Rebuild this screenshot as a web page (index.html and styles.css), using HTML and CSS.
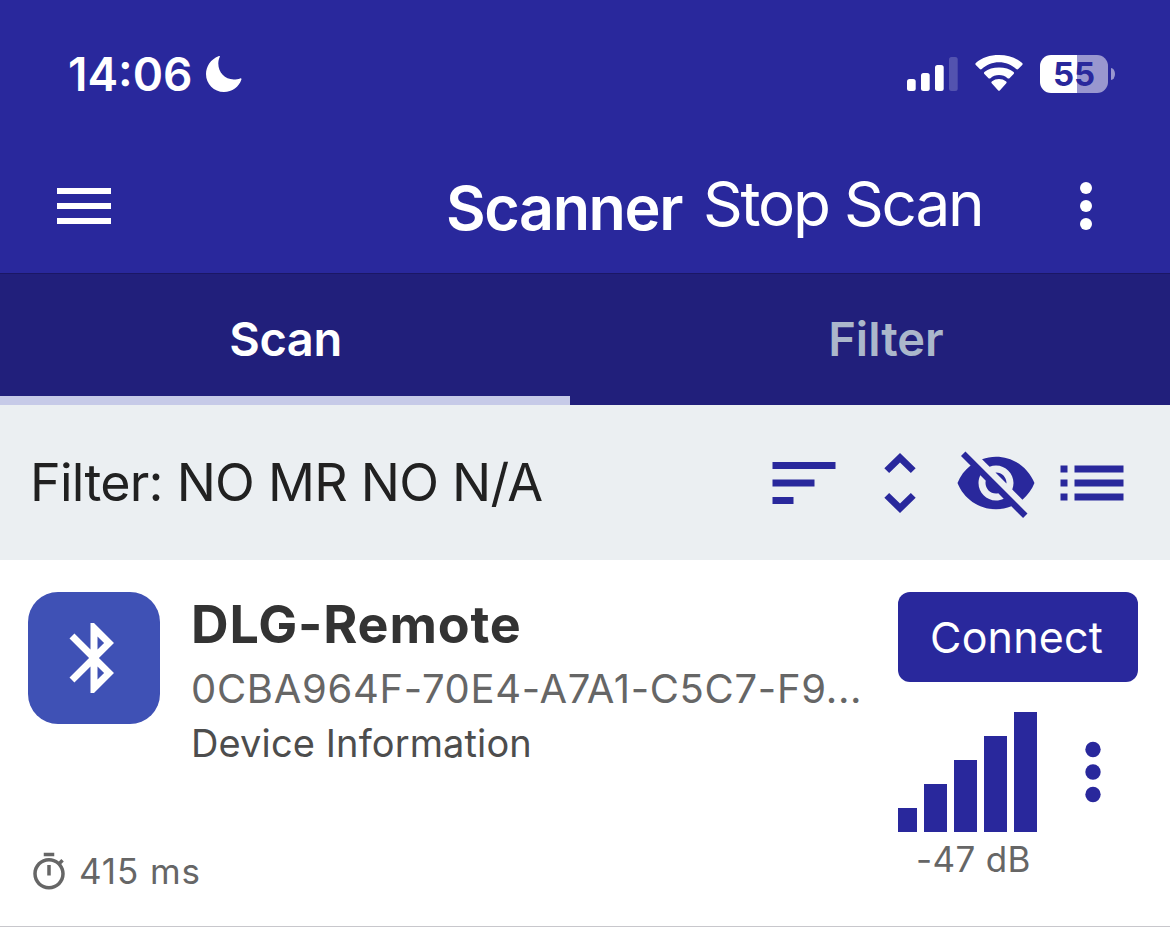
FILE: index.html
```html
<!DOCTYPE html>
<html lang="en">
<head>
<meta charset="utf-8">
<title>Scanner</title>
<link rel="stylesheet" href="styles.css">
</head>
<body>
<header class="header">
  <div class="status">
    <div class="status-left">
      <span class="time">14:06</span>
      <svg class="moon" viewBox="0 0 36 36"><path d="M13.800.8C12.800 3 12.300 5.200 12.300 7.600c0 9 6.600 15.900 15.400 15.900 2.500 0 4.500-.4 6.400-1.100 1-.4 1.600.2 1.300 1.100C33 31 26.200 36 18 36 7.900 36 0 28 0 18 0 10.200 5 3.100 12.400.2c1.100-.4 1.800-.2 1.400.6z"/></svg>
    </div>
    <div class="status-right">
      <svg class="cell" viewBox="0 0 51 34"><rect y="22" width="8.700" height="12" rx="2.500"/><rect x="14" y="16" width="8.700" height="18" rx="2.500"/><rect x="28" y="8" width="8.700" height="26" rx="2.500"/><rect x="42" width="8.700" height="34" rx="2.500" opacity=".2"/></svg>
      <svg class="wifi" viewBox="0 0 48 36"><path d="M24 7.300c6.600 0 12.600 2.500 17.200 6.700.6.600 1.400.6 2 0l4-4c.6-.6.6-1.400 0-2C41 2.600 33 0 24 0S7 2.600.8 8c-.6.600-.6 1.400 0 2l4 4c.6.600 1.400.6 2 0C11.400 9.800 17.400 7.300 24 7.300z"/><path d="M24 20c3.400 0 6.300 1.200 8.500 3.200.6.500 1.400.5 2 0l4.100-4.100c.6-.6.6-1.400 0-2C34.800 13.800 29.600 12.500 24 12.500s-10.800 1.300-14.600 4.600c-.6.600-.6 1.400 0 2l4.100 4.100c.6.500 1.400.5 2 0C17.700 21.200 20.600 20 24 20z"/><path d="M31.300 28.200c.5-.6.500-1.200-.1-1.700-4.200-3.300-10.200-3.300-14.400 0-.6.500-.6 1.100-.1 1.700l6.300 7c.6.700 1.400.7 2 0z"/></svg>
      <div class="battery"><span class="battery-level">55</span><i class="battery-cap"></i></div>
    </div>
  </div>
  <div class="toolbar">
    <svg class="ic-bar" viewBox="0 0 24 24"><path d="M3 18h18v-2H3v2zm0-5h18v-2H3v2zm0-7v2h18V6H3z"/></svg>
    <h1 class="title">Scanner</h1>
    <span class="stop">Stop Scan</span>
    <svg class="ic-bar ic-more" viewBox="0 0 24 24"><circle cx="12" cy="6" r="2"/><circle cx="12" cy="12" r="2"/><circle cx="12" cy="18" r="2"/></svg>
  </div>
</header>
<nav class="tabs">
  <div class="tab active"><span class="tab-scan">Scan</span></div>
  <div class="tab"><span class="tab-filter">Filter</span></div>
</nav>
<section class="filterbar">
  <span class="filter-text">Filter: NO MR NO N/A</span>
  <div class="filter-icons">
    <svg viewBox="0 0 24 24"><path d="M3 18h6v-2H3v2zM3 6v2h18V6H3zm0 7h12v-2H3v2z"/></svg>
    <svg class="unfold" viewBox="0 0 24 24" preserveAspectRatio="none"><path d="M12 5.830L15.170 9l1.410-1.410L12 3 7.410 7.590 8.830 9 12 5.830zm0 12.340L8.830 15l-1.410 1.410L12 21l4.590-4.590L15.170 15 12 18.170z"/></svg>
    <svg viewBox="0 0 24 24"><path d="M12 7c2.760 0 5 2.240 5 5 0 .65-.13 1.260-.36 1.830l2.920 2.920c1.510-1.260 2.700-2.890 3.430-4.750-1.730-4.390-6-7.500-11-7.500-1.400 0-2.740.25-3.980.7l2.160 2.160C10.740 7.130 11.350 7 12 7zM2 4.270l2.280 2.280.46.460C3.080 8.300 1.780 10.020 1 12c1.730 4.390 6 7.500 11 7.500 1.550 0 3.030-.3 4.380-.84l.42.420L19.730 22 21 20.730 3.270 3 2 4.270zM7.530 9.800l1.550 1.550c-.05.210-.08.430-.08.650 0 1.660 1.340 3 3 3 .22 0 .44-.03.650-.08l1.550 1.550c-.67.330-1.410.530-2.200.530-2.760 0-5-2.240-5-5 0-.79.200-1.530.530-2.200zm4.310-.78l3.150 3.150.02-.16c0-1.660-1.340-3-3-3l-.17.010z"/></svg>
    <svg viewBox="0 0 24 24"><path d="M3 13h2v-2H3v2zm0 4h2v-2H3v2zm0-8h2V7H3v2zm4 4h14v-2H7v2zm0 4h14v-2H7v2zM7 7v2h14V7H7z"/></svg>
  </div>
</section>
<article class="device">
  <div class="avatar"><svg viewBox="0 0 24 24"><path d="M17.710 7.710L12 2h-1v7.590L6.410 5 5 6.410 10.590 12 5 17.590 6.410 19 11 14.410V22h1l5.710-5.710-4.300-4.290 4.300-4.290zM13 5.830l1.880 1.880L13 9.590V5.830zm1.880 10.460L13 18.170v-3.760l1.880 1.880z"/></svg></div>
  <div class="info">
    <h2 class="name">DLG-Remote</h2>
    <div class="uuid">0CBA964F-70E4-A7A1-C5C7-F9...</div>
    <div class="service">Device Information</div>
  </div>
  <div class="side">
    <button class="connect">Connect</button>
    <div class="signal-row">
      <div class="signal">
        <div class="bars"><i class="b1"></i><i class="b2"></i><i class="b3"></i><i class="b4"></i><i class="b5"></i></div>
        <span class="rssi">-47 dB</span>
      </div>
      <svg class="dots" viewBox="0 0 24 24"><circle cx="12" cy="6" r="2.050"/><circle cx="12" cy="12" r="2.050"/><circle cx="12" cy="18" r="2.050"/></svg>
    </div>
  </div>
  <div class="interval">
    <svg viewBox="0 0 24 24"><path d="M15 1H9v2h6V1zm-4 13h2V8h-2v6zm8.030-6.610l1.420-1.420c-.43-.51-.9-.99-1.410-1.410l-1.420 1.420C16.070 4.740 14.120 4 12 4c-4.970 0-9 4.030-9 9s4.020 9 9 9 9-4.030 9-9c0-2.120-.74-4.070-1.970-5.610zM12 20c-3.870 0-7-3.130-7-7s3.130-7 7-7 7 3.130 7 7-3.130 7-7 7z"/></svg>
    <span class="ms">415 ms</span>
  </div>
</article>
</body>
</html>
```
FILE: styles.css
```css
* { box-sizing: border-box; margin: 0; padding: 0; }
body { width: 1170px; height: 929px; overflow: hidden; background: #fff; font-family: Inter, "Liberation Sans", sans-serif; }
svg { display: block; fill: currentColor; flex: none; }
span, h1, h2, .uuid, .service { white-space: nowrap; }

.header { height: 274px; background: #29289c; color: #fff; border-bottom: 1px solid #1b1765; }
.status { height: 139px; padding: 48px 55px 0 68px; display: flex; justify-content: space-between; }
.status-left { display: flex; height: 52px; align-items: center; }
.time { width: 138px; font-size: 46px; line-height: 52px; font-weight: 600; }
.moon { width: 36px; height: 36px; }
.status-right { display: flex; height: 52px; align-items: center; }
.cell { width: 51px; height: 34px; margin-right: 17px; }
.wifi { width: 48px; height: 36px; margin-right: 17px; margin-top: -2px; }
.battery { display: flex; align-items: center; }
.battery-level { width: 68px; height: 38px; border-radius: 11px; background: linear-gradient(90deg, #fff 37px, #9997cf 37px); color: #29289c; font-size: 33px; line-height: 38px; font-weight: 700; text-align: center; }
.battery-cap { width: 4px; height: 12px; margin-left: 3px; border-radius: 0 4px 4px 0 / 0 6px 6px 0; background: #9997cf; }

.toolbar { height: 134px; padding: 0 48px; display: flex; align-items: center; }
.ic-bar { width: 72px; height: 72px; }
.title { margin: 4px 0 0 326px; width: 257px; font-size: 61px; line-height: 74px; font-weight: 600; letter-spacing: -1.4px; }
.stop { margin-top: -5px; font-size: 62px; line-height: 74px; letter-spacing: -2.2px; }
.ic-more { margin-left: auto; }

.tabs { height: 131px; background: #211f7b; display: flex; gap: 30px; }
.tab { width: 570px; display: flex; justify-content: center; border-bottom: 9px solid transparent; color: #abb7cb; font-size: 47px; line-height: 129px; font-weight: 600; }
.tab.active { color: #fff; border-color: #c6cae8; }
.tab-scan { letter-spacing: -.4px; padding-left: 1px; }
.tab-filter { padding-left: 2px; }

.filterbar { height: 155px; padding: 0 36px 0 30px; background: #ebeff2; display: flex; justify-content: space-between; align-items: center; }
.filter-text { color: #212121; font-size: 52px; letter-spacing: -.75px; }
.filter-icons { display: flex; gap: 12px; color: #29289c; }
.filter-icons svg { width: 84px; height: 84px; }
.filter-icons .unfold { width: 82px; height: 80px; margin: 2px 1px; }

.device { height: 367px; padding: 32px 32px 0 28px; border-bottom: 1px solid #c8c7cc; display: grid; grid-template-columns: 132px 706px 1fr; column-gap: 32px; grid-template-rows: 259px 42px; }
.avatar { width: 132px; height: 132px; border-radius: 30px; background: #3f51b5; color: #fff; display: grid; place-items: center; }
.avatar svg { width: 84px; height: 84px; }
.info { margin-left: -1px; }
.name { color: #333; font-size: 52px; line-height: 66px; font-weight: 700; letter-spacing: .85px; }
.uuid { color: #666; font-size: 40px; line-height: 62px; letter-spacing: .68px; }
.service { color: #4d4d4d; font-size: 38px; line-height: 46px; letter-spacing: .12px; }
.side { grid-row: 1 / 3; grid-column: 3; margin-left: -32px; width: 240px; }
.connect { display: block; width: 240px; height: 90px; padding-right: 3px; border: 0; border-radius: 12px; background: #29289c; color: #fff; font-family: inherit; font-size: 43px; line-height: 90px; letter-spacing: .15px; text-align: center; }
.signal-row { display: flex; margin-top: 30px; }
.signal { width: 150px; }
.bars { display: flex; align-items: flex-end; height: 120px; gap: 7.5px; }
.bars i { width: 22.5px; background: #29289c; }
.bars .b1 { width: 18.5px; height: 24px; }
.bars .b2 { height: 48px; }
.bars .b3 { height: 72px; }
.bars .b4 { height: 96px; }
.bars .b5 { height: 120px; }
.rssi { display: block; padding-left: 18px; margin-top: 4px; color: #666; font-size: 35px; line-height: 46px; letter-spacing: .35px; }
.dots { width: 90px; height: 90px; margin-top: 15px; color: #29289c; }
.interval { grid-row: 2; grid-column: 1 / 3; display: flex; align-items: center; color: #666; }
.interval svg { width: 42px; height: 42px; }
.ms { margin: -2px 0 0 9px; font-size: 35px; line-height: 42px; letter-spacing: .9px; }
```
